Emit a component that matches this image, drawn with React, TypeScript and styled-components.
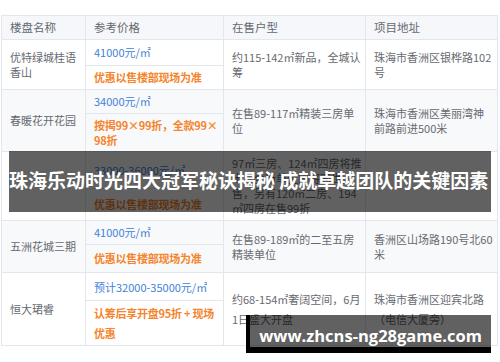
import React from 'react';
import styled, { createGlobalStyle } from 'styled-components';

const GlobalStyle = createGlobalStyle`
  html, body {
    margin: 0;
    padding: 0;
    background: #ffffff;
  }
  body {
    font-family: "Noto Sans CJK SC", "Noto Sans", sans-serif;
  }
`;

const COLOR = {
  border: '#e3e6ec',
  head: '#f5f7fa',
  stripe: '#f8f9fb',
  text: '#666a70',
  blue: '#3f82d8',
  orange: '#f5842c'
};

const S = {
  Page: styled.div`
    position: relative;
    width: 500px;
    height: 362px;
    overflow: hidden;
    padding: 15px 2px 0 1px;
    box-sizing: border-box;
  `,
  Table: styled.div`
    border-top: 1px solid ${COLOR.border};
    border-left: 1px solid ${COLOR.border};
  `,
  Row: styled.div<{ $h: number; $bg: string; $lh: number }>`
    display: grid;
    grid-template-columns: 84px 138px 142px 1fr;
    height: ${(p) => p.$h}px;
    background: ${(p) => p.$bg};
    line-height: ${(p) => p.$lh}px;
  `,
  Cell: styled.div<{ $head?: boolean }>`
    display: flex;
    align-items: center;
    padding: 0 3px 0 8px;
    border-right: 1px solid ${COLOR.border};
    border-bottom: 1px solid ${COLOR.border};
    font-size: ${(p) => (p.$head ? 11.5 : 11)}px;
    color: ${COLOR.text};
    word-break: break-all;
    overflow: hidden;
  `,
  PriceCol: styled.div`
    display: flex;
    flex-direction: column;
    border-right: 1px solid ${COLOR.border};
    border-bottom: 1px solid ${COLOR.border};
  `,
  Price: styled.div<{ $h: number }>`
    display: flex;
    align-items: center;
    height: ${(p) => p.$h}px;
    flex: none;
    padding: 0 8px;
    border-bottom: 1px solid ${COLOR.border};
    font-size: 11px;
    color: ${COLOR.blue};
  `,
  Promo: styled.div`
    flex: 1;
    display: flex;
    align-items: center;
    padding: 0 1px 0 8px;
    font-size: 11px;
    font-weight: 700;
    color: ${COLOR.orange};
    letter-spacing: -0.25px;
    word-break: break-all;
  `,
  TitleBar: styled.div`
    position: absolute;
    left: 9px;
    top: 151px;
    width: 482px;
    height: 61px;
    display: flex;
    align-items: center;
    background: rgba(0, 0, 0, 0.62);
    color: #ffffff;
    font-size: 19px;
    font-weight: 700;
    white-space: nowrap;
    padding-bottom: 4px;
    box-sizing: border-box;
  `,
  Watermark: styled.div`
    position: absolute;
    left: 246px;
    top: 315px;
    width: 241px;
    height: 23px;
    display: flex;
    align-items: center;
    justify-content: center;
    padding-top: 9px;
    background: rgba(0, 0, 0, 0.62);
    border-left: 4px solid #000;
    border-bottom: 6px solid #000;
    color: #ffffff;
    font-family: "Open Sans", "DejaVu Sans", sans-serif;
    font-size: 16.5px;
    font-weight: 700;
  `
};

type Item = {
  name: string;
  price: string;
  promo: string;
  layout: string;
  addr: string;
  h: number;
  top: number;
  lh: number;
};

const items: Item[] = [
  { name: '优特绿城桂语香山', price: '41000元/㎡', promo: '优惠以售楼部现场为准', layout: '约115-142㎡新品，全城认筹', addr: '珠海市香洲区银桦路102号', h: 50, top: 25, lh: 15 },
  { name: '春暖花开花园', price: '34000元/㎡', promo: '按揭99×99折，全款99×98折', layout: '在售89-117㎡精装三房单位', addr: '珠海市香洲区美丽湾神前路前进500米', h: 62, top: 23, lh: 15 },
  { name: '', price: '33000-36000元/㎡', promo: '优惠以售楼部现场为准', layout: '97㎡三房、124㎡四房将推出，全新单位即将面世开售，另有120㎡二房、194㎡四房在售99折', addr: '', h: 69, top: 36, lh: 15 },
  { name: '五洲花城三期', price: '41000元/㎡', promo: '优惠以售楼部现场为准', layout: '在售89-189㎡的二至五房精装单位', addr: '香洲区山场路190号北60米', h: 52, top: 23, lh: 15 },
  { name: '恒大珺睿', price: '预计32000-35000元/㎡', promo: '认筹后享开盘95折 + 现场优惠', layout: '约68-154㎡奢阔空间，6月1日盛大开盘', addr: '珠海市香洲区迎宾北路（电信大厦旁）', h: 73, top: 27, lh: 20 }
];

const App = () => (
  <>
    <GlobalStyle />
    <S.Page>
      <S.Table>
        <S.Row $h={24} $bg={COLOR.head} $lh={15}>
          <S.Cell $head>楼盘名称</S.Cell>
          <S.Cell $head>参考价格</S.Cell>
          <S.Cell $head>在售户型</S.Cell>
          <S.Cell $head>项目地址</S.Cell>
        </S.Row>
        {items.map((it, i) => (
          <S.Row key={i} $h={it.h} $bg={i % 2 === 1 ? COLOR.stripe : '#ffffff'} $lh={it.lh}>
            <S.Cell>{it.name}</S.Cell>
            <S.PriceCol>
              <S.Price $h={it.top}>{it.price}</S.Price>
              <S.Promo>{it.promo}</S.Promo>
            </S.PriceCol>
            <S.Cell>{it.layout}</S.Cell>
            <S.Cell>{it.addr}</S.Cell>
          </S.Row>
        ))}
      </S.Table>
      <S.TitleBar>珠海乐动时光四大冠军秘诀揭秘 成就卓越团队的关键因素</S.TitleBar>
      <S.Watermark>www.zhcns-ng28game.com</S.Watermark>
    </S.Page>
  </>
);

export default App;
